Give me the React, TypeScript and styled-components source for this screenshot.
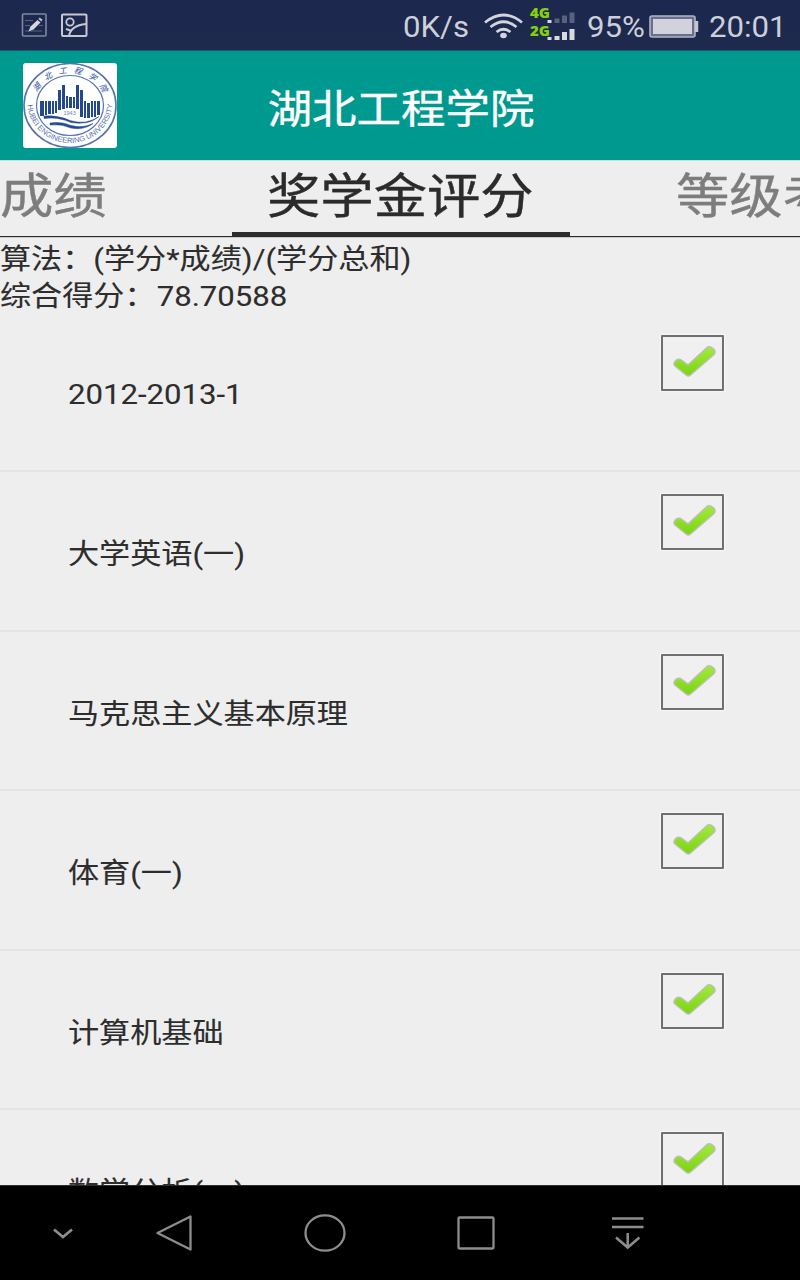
import React from "react";
import styled, { createGlobalStyle } from "styled-components";

const GlobalStyle = createGlobalStyle`
  * { box-sizing: border-box; }
  body { margin: 0; background: #000; font-family: Roboto, "Noto Sans CJK SC", sans-serif; }
`;

const Screen = styled.div`
  width: 800px;
  height: 1280px;
  display: flex;
  flex-direction: column;
  overflow: hidden;
  background: #eeeeee;
`;

const Wide = styled.span<{ $origin?: string }>`
  display: inline-block;
  white-space: nowrap;
  transform: scaleX(1.111);
  transform-origin: ${(p) => p.$origin ?? "left"} center;
`;

const StatusBar = styled.header`
  height: 51px;
  flex: none;
  display: flex;
  justify-content: space-between;
  background: linear-gradient(#1b274d, #1f2a4e);
  border-bottom: 1px solid #155b6c;
`;

const StatusText = styled.div<{ $width: number }>`
  width: ${(p) => p.$width}px;
  padding-top: 2px;
  line-height: 51px;
  font-size: 29px;
  color: #cdcfd9;
  span { transform: scaleX(1.075); }
`;

const StatusGroup = styled.div`
  display: flex;
  height: 50px;
`;

const AppBar = styled.div`
  height: 109px;
  flex: none;
  display: grid;
  grid-template-columns: 140px 1fr 140px;
  align-items: center;
  padding-top: 1px;
  background: #00998f;
`;

const LogoTile = styled.div`
  width: 94px;
  height: 85px;
  margin: -2px 0 0 23px;
  border-radius: 3px;
  background: #fff;
  overflow: hidden;
  svg { display: block; }
`;

const Title = styled.h1`
  margin: 7px 0 0 1px;
  text-align: center;
  font-size: 40px;
  line-height: 60px;
  font-weight: 400;
  color: #fff;
  -webkit-text-stroke: 0.4px #fff;
`;

const Tabs = styled.nav`
  height: 78px;
  flex: none;
  display: flex;
  border-top: 1px solid #c3e2df;
  border-bottom: 1px solid #c9cbc9;
  box-shadow: inset 0 -1px #2b2b2b;
  overflow: hidden;
`;

const Tab = styled.div<{ $width: number; $indent?: number; $active?: boolean }>`
  flex: none;
  width: ${(p) => p.$width}px;
  height: 76px;
  padding-left: ${(p) => p.$indent ?? 0}px;
  border-bottom: ${(p) => (p.$active ? "5px solid #2c2c2c" : "0")};
  line-height: 71px;
  font-size: 48px;
  color: ${(p) => (p.$active ? "#2b2b2b" : "#7d7d7d")};
  -webkit-text-stroke: 0.4px currentColor;
`;

const Summary = styled.section`
  height: 75px;
  flex: none;
  padding-top: 2.5px;
  font-size: 28px;
  line-height: 37.5px;
  color: #2d2d2d;
  -webkit-text-stroke: 0.1px currentColor;
`;

const Line = styled.div`
  height: 37.5px;
`;

const Score = styled.span`
  margin-left: 1px;
`;

const List = styled.main`
  flex: 1;
  min-height: 0;
  overflow: hidden;
`;

const Row = styled.div`
  height: 159.45px;
  display: flex;
  justify-content: space-between;
  padding: 0 76px 0 68px;
  border-bottom: 2px solid #e4e4e4;
`;

const RowLabel = styled.div<{ $term: boolean }>`
  padding-top: ${(p) => (p.$term ? 61 : 62)}px;
  font-size: 28px;
  line-height: 42px;
  color: #2d2d2d;
  -webkit-text-stroke: 0.1px currentColor;
`;

const CheckBox = styled.div`
  width: 63px;
  height: 56px;
  margin-top: 22px;
  border: 2px solid #707070;
  border-radius: 1px;
  background: #f0f0f0;
  box-shadow: 0 0 2px 1px #f8f8f8;
  svg { display: block; }
`;

const NavBar = styled.footer`
  height: 95px;
  flex: none;
  background: #000;
  border-top: 1px solid #2c2c2c;
  svg { display: block; }
`;

const rows = ["2012-2013-1", "大学英语(一)", "马克思主义基本原理", "体育(一)", "计算机基础", "数学分析(一)"];

const NoticeIcons = () => (
  <svg width="100" height="50" fill="none">
    <rect x="22.5" y="14" width="23.5" height="22" rx="1" stroke="#8088a2" strokeWidth="1.6" />
    <path d="M25 20.5h8M25 25.5h5M25 31h17M39 25.5h4" stroke="#59627f" />
    <path d="M28.5 31.5l2-5 7-6.5 3 2.5-7 7z" fill="#d5d7df" />
    <path d="M39 18.2l3 2.4" stroke="#b8bcc9" strokeWidth="2" />
    <rect x="62" y="14.5" width="24.5" height="21.5" rx="1" stroke="#c6c8d2" strokeWidth="2" />
    <circle cx="70" cy="22" r="3.7" stroke="#c6c8d2" strokeWidth="1.8" />
    <path d="M69 36c1-6 6-11 17-12M66 29l6 2" stroke="#c6c8d2" strokeWidth="2" />
  </svg>
);

const SignalIcons = () => (
  <svg width="107" height="50" fill="none">
    <g stroke="#d3d5dd" strokeWidth="2.7">
      <path d="M5 22.5q18.500-15 37 0M10.500 27q13-10.500 26 0M16.500 32q7-5.500 14 0" />
    </g>
    <ellipse cx="23.500" cy="35.500" rx="3.300" ry="2.800" fill="#d3d5dd" />
    <g fill="#85d00d" fontFamily="Open Sans, sans-serif" fontWeight="800" fontSize="14">
      <text x="50" y="18" textLength="20" lengthAdjust="spacingAndGlyphs">4G</text>
      <text x="50" y="36" textLength="20" lengthAdjust="spacingAndGlyphs">2G</text>
    </g>
    <path d="M67.500 20h4v3h-4zM67.500 37h4v3h-4zM74.500 36h5v4h-5zM82 32h5v8h-5zM89.500 29h5v11h-5z" fill="#d8dae2" />
    <path d="M74.500 18.500h5V23h-5zM82 15.500h5V23h-5zM89.500 12.500h5V23h-5z" fill="#59617e" />
  </svg>
);

const BatteryIcon = () => (
  <svg width="60" height="50" fill="none">
    <rect x="1" y="16" width="45" height="21" rx="2" fill="#68708b" stroke="#b0b4c4" strokeWidth="1.6" />
    <rect x="4" y="19" width="39" height="15" fill="#d1d2de" />
    <path d="M47.500 21v11" stroke="#c4c7d2" strokeWidth="3.500" />
  </svg>
);

const Logo = () => (
  <svg width="94" height="85" viewBox="0 0 94 85" fill="none">
    <defs>
      <path id="upperArc" d="M11 43a36 33 0 0 1 72 0" />
      <path id="lowerArc" d="M4.500 39a42.500 41 0 0 0 85 0" />
    </defs>
    <g stroke="#5872b0">
      <ellipse cx="47" cy="42.500" rx="46" ry="42" strokeWidth="1.600" />
      <ellipse cx="47" cy="42.500" rx="33.500" ry="30" strokeWidth="1.200" />
    </g>
    <g fill="#4a66a8" fontSize="8">
      <text fontStyle="italic" fontWeight="500" letterSpacing="6.500"><textPath href="#upperArc" startOffset="14">湖北工程学院</textPath></text>
      <text fontFamily="Liberation Sans, sans-serif" fontSize="7.500" fill="#5570ae">
        <textPath href="#lowerArc" startOffset="3" textLength="126" lengthAdjust="spacing">HUBEI ENGINEERING UNIVERSITY</textPath>
      </text>
    </g>
    <path d="M17 38h4v15h-4zM22 38h2v14h-2zM25 38h3v13h-3zM29 38h2v13h-2zM32 38h2v12h-2zM35 27h3v20h-3zM39 22h3v24h-3zM43 33h2v12h-2zM46 34h3v11h-3zM50 34h2v11h-2zM53 22h3v24h-3zM57 27h3v27h-3zM61 38h2v17h-2zM64 40h3v15h-3zM68 38h2v16h-2zM71 38h2v16h-2zM74 38h3v14h-3z" fill="#234890" />
    <text x="40.500" y="52" fontSize="5.500" fontFamily="Liberation Sans, sans-serif" fill="#6d82b8">1943</text>
    <path d="M21 53q14-1 26 4.500 16 5 29-4-10 9-28 6-13-6-27-4zM27 60q11-2 21 2.500 12 3 22-2-9 7-22 4.500-10-4.500-21-3z" fill="#234890" stroke="#234890" strokeWidth=".5" />
  </svg>
);

const Check = () => (
  <svg width="59" height="52" fill="none">
    <defs>
      <linearGradient id="leaf" x1="0" y1="0" x2="0" y2="1">
        <stop offset="0" stopColor="#a2ea3c" />
        <stop offset="1" stopColor="#7bd411" />
      </linearGradient>
    </defs>
    <path d="M12 24.500q3-4 7-1l6 4.500L44 10.500q3.500-2 7 2 2 2.500 0 5L27.500 38q-2 2-4.500 0l-11-9q-2-2 0-4.500z" fill="url(#leaf)" stroke="#b9c0b2" strokeWidth="1.500" />
  </svg>
);

const NavIcons = () => (
  <svg width="800" height="94" fill="none" stroke="#8d8d8d" strokeWidth="2.300">
    <path d="M54 43.500l9 7.500 9-7.500" strokeWidth="2.800" />
    <path d="M190.500 30.500v33L157.500 47z" strokeLinejoin="round" />
    <ellipse cx="325" cy="47" rx="19.500" ry="17.700" />
    <rect x="458.500" y="31.500" width="35" height="31" rx="1" />
    <path d="M612 32.500h31.500M612 41h31.500M627.700 47v14M616 51.500l11.700 10 11.700-10" strokeWidth="2.500" />
  </svg>
);

export default function App() {
  return (
    <Screen>
      <GlobalStyle />
      <StatusBar>
        <NoticeIcons />
        <StatusGroup>
          <StatusText $width={77}><Wide>0K/s</Wide></StatusText>
          <SignalIcons />
          <StatusText $width={62}><Wide>95%</Wide></StatusText>
          <BatteryIcon />
          <StatusText $width={91}><Wide>20:01</Wide></StatusText>
        </StatusGroup>
      </StatusBar>
      <AppBar>
        <LogoTile><Logo /></LogoTile>
        <Title><Wide $origin="center">湖北工程学院</Wide></Title>
      </AppBar>
      <Tabs>
        <Tab $width={232}><Wide>成绩</Wide></Tab>
        <Tab $width={338} $indent={35} $active><Wide>奖学金评分</Wide></Tab>
        <Tab $width={338} $indent={106}><Wide>等级考试</Wide></Tab>
      </Tabs>
      <Summary>
        <Line><Wide>算法：(学分*成绩)/(学分总和)</Wide></Line>
        <Line><Wide>综合得分：<Score>78.70588</Score></Wide></Line>
      </Summary>
      <List>
        {rows.map((label, i) => (
          <Row key={label}>
            <RowLabel $term={i === 0}><Wide>{label}</Wide></RowLabel>
            <CheckBox><Check /></CheckBox>
          </Row>
        ))}
      </List>
      <NavBar><NavIcons /></NavBar>
    </Screen>
  );
}
